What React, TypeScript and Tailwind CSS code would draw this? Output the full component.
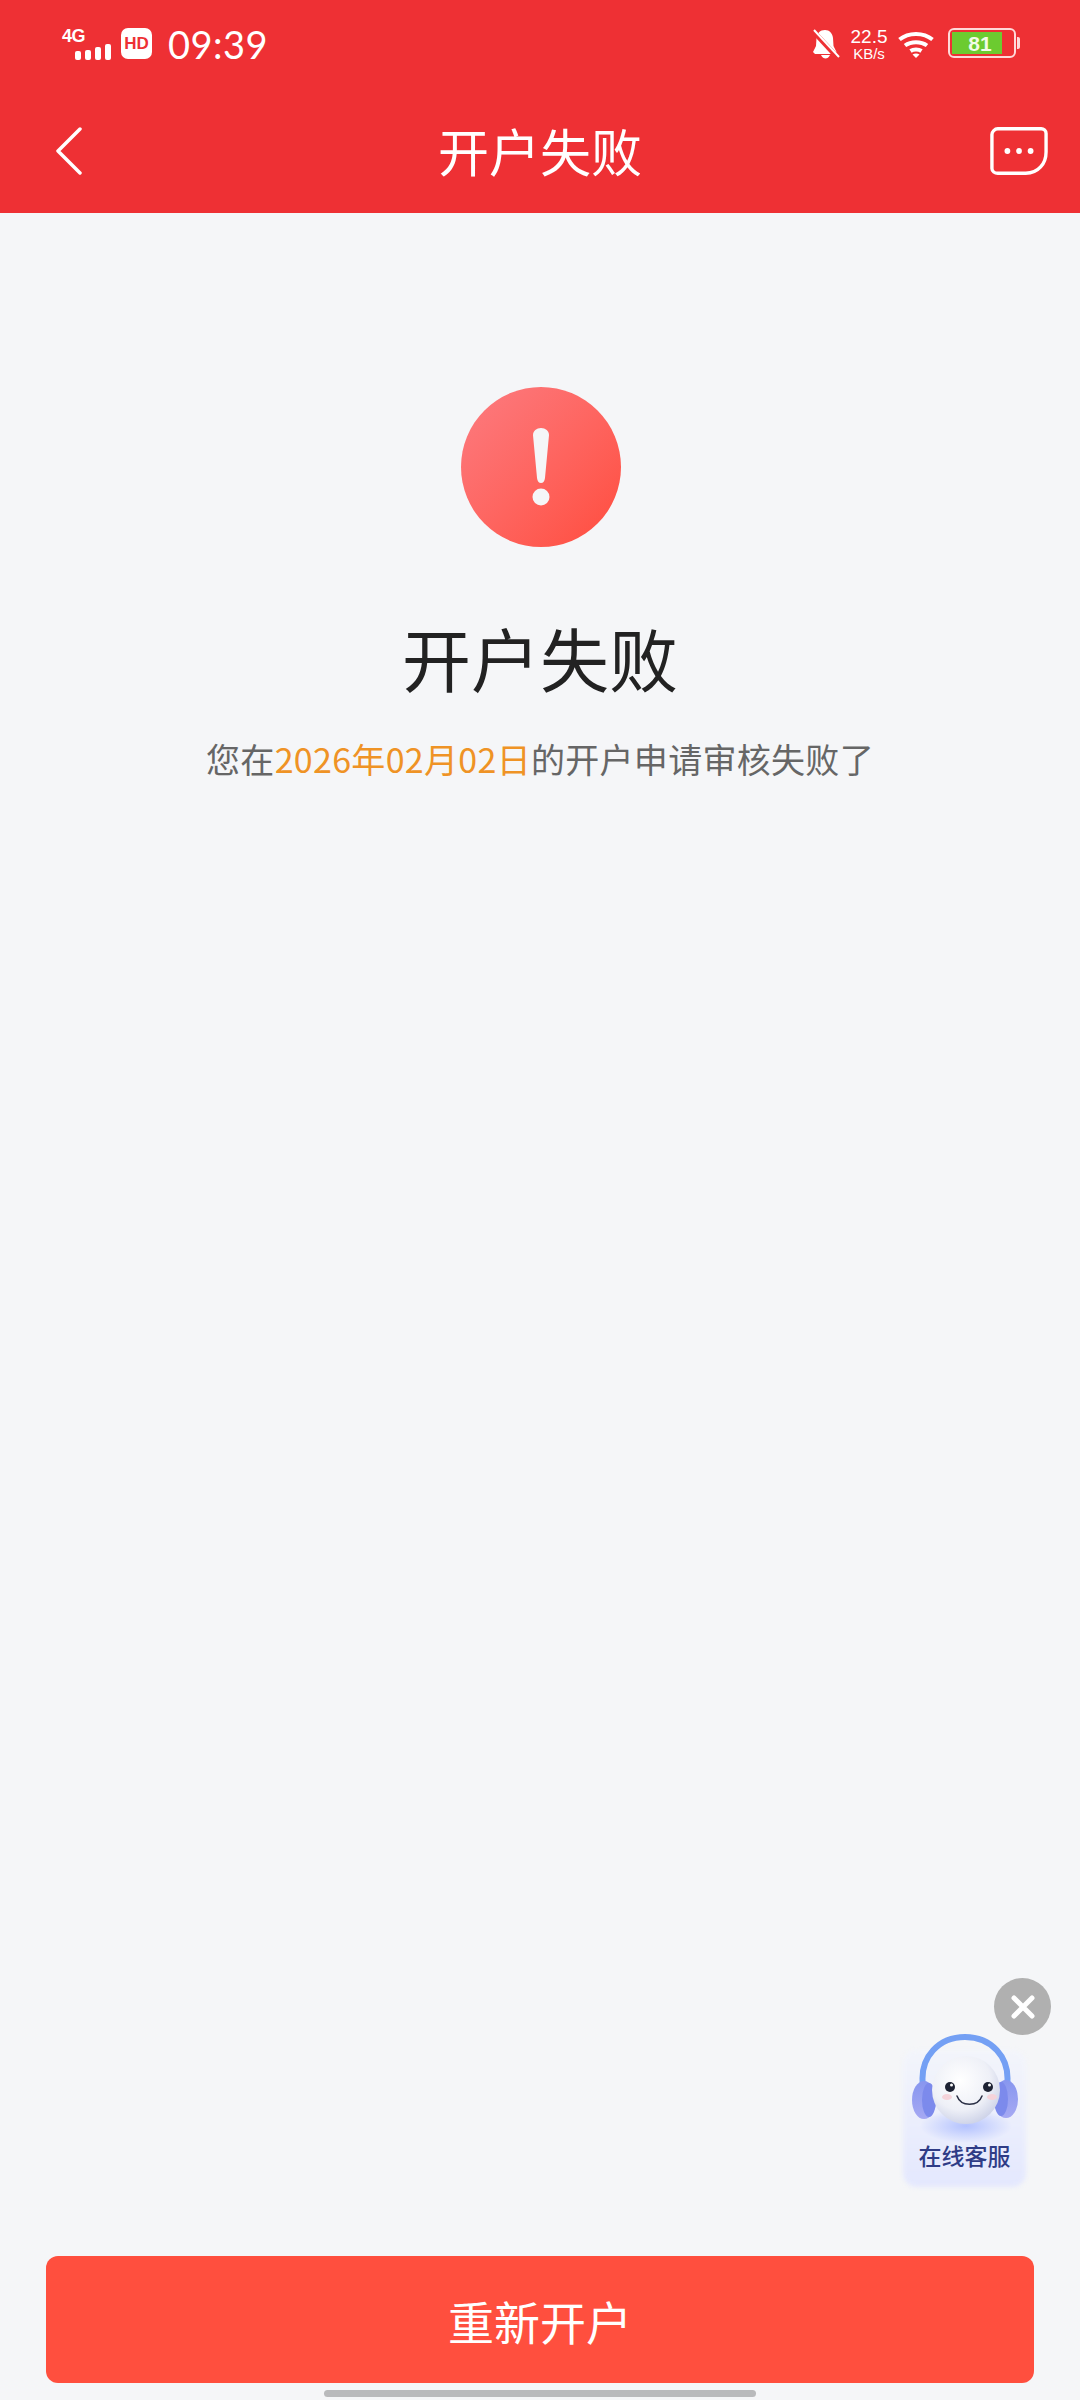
import React from "react";

const CJK = { fontFamily: '"Noto Sans CJK SC", "Noto Sans", sans-serif' };

function Signal() {
  return (
    <div className="relative w-[48px] h-[32px]">
      <span className="absolute left-0 top-[-2px] text-[18px] leading-[20px] font-bold text-white font-['Liberation_Sans',sans-serif] tracking-[-0.5px]">4G</span>
      <div className="absolute left-[13px] bottom-[0px] flex items-end gap-[4px]">
        <span className="w-[6px] h-[9px] rounded-[2px] bg-white" />
        <span className="w-[6px] h-[10px] rounded-[2px] bg-white" />
        <span className="w-[6px] h-[13px] rounded-[2px] bg-white" />
        <span className="w-[6px] h-[16px] rounded-[2px] bg-white" />
      </div>
    </div>
  );
}

function Bell() {
  return (
    <svg width="30" height="32" viewBox="0 0 30 32">
      <path d="M14 2c-5 0-8 3.500-8.500 8L5 18l-3 6 2 2h20l1.500-2-3-6-.5-8c-.5-4.500-3.500-8-8-8Z" fill="#fff" />
      <path d="M10 27c1 2.500 3 3.500 4.500 3.500s3.500-1 4.500-3.500Z" fill="#fff" />
      <path d="M2 3 27 30" stroke="#EE3034" strokeWidth="5" />
      <path d="M3 2 28 29" stroke="#fff" strokeWidth="2" />
    </svg>
  );
}

function Wifi() {
  return (
    <svg width="36" height="28" viewBox="0 0 36 28" fill="none" stroke="#fff" strokeWidth="4">
      <path d="M1.500 8.500C10.500 1 25.500 1 34.500 8.500" />
      <path d="M7 14.500c6-4.500 16-4.500 22 0" />
      <path d="M12.500 20c3-2 8-2 11 0" />
      <path d="M18 27l-3.500-3.500c2-1.200 5-1.200 7 0Z" fill="#fff" stroke="none" />
    </svg>
  );
}

function Battery() {
  return (
    <div className="flex items-center gap-[1px]">
      <div className="w-[68px] h-[30px] rounded-[6px] border-2 border-[#ffd9d9] p-[2px] flex">
        <div className="w-[50px] h-full bg-[#6CCB30] flex items-center justify-center">
          <span className="text-[21px] leading-none font-bold text-[#F2FBE6] font-['Liberation_Sans',sans-serif] pl-[6px]">81</span>
        </div>
      </div>
      <span className="w-[3px] h-[12px] rounded-r-[2px] bg-[#ffd9d9]" />
    </div>
  );
}

function Mascot() {
  return (
    <svg width="114" height="110" viewBox="0 0 114 110" className="absolute left-0 top-0">
      <defs>
        <radialGradient id="face" cx="0.42" cy="0.36" r="0.72">
          <stop offset="0" stopColor="#ffffff" />
          <stop offset="0.6" stopColor="#eef0f7" />
          <stop offset="1" stopColor="#c5cbe4" />
        </radialGradient>
        <linearGradient id="cup" x1="0" y1="0" x2="0" y2="1">
          <stop offset="0" stopColor="#8796ef" />
          <stop offset="1" stopColor="#a6a9f3" />
        </linearGradient>
        <radialGradient id="glow" cx="0.5" cy="0.5" r="0.5">
          <stop offset="0" stopColor="#a9baff" stopOpacity="0.85" />
          <stop offset="1" stopColor="#a9baff" stopOpacity="0" />
        </radialGradient>
      </defs>
      <ellipse cx="54" cy="92" rx="46" ry="17" fill="url(#glow)" />
      <path d="M11 52C7 22 28 3 53 3s46 19 42 49" fill="none" stroke="#74a0f4" strokeWidth="6" />
      <ellipse cx="12" cy="66" rx="12" ry="19" fill="url(#cup)" />
      <ellipse cx="94" cy="65" rx="12" ry="19" fill="url(#cup)" />
      <ellipse cx="17" cy="66" rx="7" ry="17" fill="#7c8aec" />
      <ellipse cx="89" cy="65" rx="7" ry="17" fill="#7c8aec" />
      <circle cx="54" cy="56" r="34" fill="url(#face)" />
      <circle cx="38" cy="53" r="5" fill="#1d2233" />
      <circle cx="76" cy="53" r="5" fill="#1d2233" />
      <circle cx="39.500" cy="51" r="1.500" fill="#fff" />
      <circle cx="77.500" cy="51" r="1.500" fill="#fff" />
      <ellipse cx="35" cy="63" rx="5" ry="3" fill="#f5d3da" />
      <ellipse cx="80" cy="63" rx="5" ry="3" fill="#f5d3da" />
      <path d="M45 62c4 11 21 11 25 0" fill="none" stroke="#2b3046" strokeWidth="1.500" strokeLinecap="round" />
    </svg>
  );
}

export default function App() {
  return (
    <div className="relative w-[1080px] h-[2400px] flex flex-col bg-[#F5F6F8] overflow-hidden" style={CJK}>
      <header className="h-[213px] shrink-0 bg-[#EE3034] text-white flex flex-col">
        <div className="h-[88px] pl-[62px] pr-[60px] pt-[28px] flex items-start justify-between">
          <div className="flex items-start">
            <Signal />
            <div className="ml-[11px] mt-[0px] w-[31px] h-[31px] rounded-[7px] bg-white flex items-center justify-center">
              <span className="text-[17px] leading-none font-black text-[#EE3034] font-['Liberation_Sans',sans-serif]">HD</span>
            </div>
            <span className="ml-[16px] text-[38px] leading-[32px] tracking-[0.5px] font-['Lato',sans-serif]">09:39</span>
          </div>
          <div className="flex items-start">
            <Bell />
            <div className="ml-[9px] w-[38px] flex flex-col items-center font-['Liberation_Sans',sans-serif]">
              <span className="text-[19px] leading-[18px]">22.5</span>
              <span className="text-[15px] leading-[15px]">KB/s</span>
            </div>
            <div className="ml-[10px] mt-[3px]"><Wifi /></div>
            <div className="ml-[14px]"><Battery /></div>
          </div>
        </div>
        <div className="h-[125px] pl-[54px] pr-[32px] flex items-center">
          <div className="w-[98px]">
            <svg width="30" height="48" viewBox="0 0 30 48" fill="none" stroke="#fff" strokeWidth="3.500" strokeLinecap="round" strokeLinejoin="round">
              <path d="M26 2 4 24l22 22" />
            </svg>
          </div>
          <h1 className="flex-1 text-center text-[51px] leading-none font-normal">开户失败</h1>
          <div className="w-[120px] flex justify-end">
            <svg width="58" height="50" viewBox="0 0 60 50" fill="none" stroke="#fff" strokeWidth="3.500">
              <path d="M8 2h45c2.500 0 5 2 5 5v19c0 12-8 22-21 22H8c-3 0-6-2-6-5V8c0-3 3-6 6-6Z" />
              <g fill="#fff" stroke="none">
                <circle cx="18" cy="25" r="3" />
                <circle cx="30" cy="25" r="3" />
                <circle cx="42" cy="25" r="3" />
              </g>
            </svg>
          </div>
        </div>
      </header>

      <main className="flex-1 flex flex-col items-center pt-[174px]">
        <div className="ml-[2px] w-[160px] h-[160px] rounded-full bg-gradient-to-br from-[#FC7B80] to-[#FF4B3C] flex items-center justify-center">
          <svg width="20" height="78" viewBox="0 0 20 78" fill="#F5F6F8">
            <path d="M2 7c0-4 3.500-7 8-7s8 3 8 7l-4 43c-.3 3-1.800 5-4 5s-3.700-2-4-5Z" />
            <circle cx="10" cy="69" r="8.500" />
          </svg>
        </div>
        <h2 className="mt-[64px] text-[69px] leading-[92px] font-normal text-[#222222]">开户失败</h2>
        <p className="mt-[32px] text-[34px] leading-[48px] text-[#666666] tracking-[0.3px]">
          您在<span className="text-[#EF9325]">2026年02月02日</span>的开户申请审核失败了
        </p>
      </main>

      <div className="absolute left-[903px] top-[1978px] w-[148px] h-[209px]">
        <button className="absolute right-0 top-0 w-[57px] h-[57px] rounded-full bg-[#B0B0B0] flex items-center justify-center">
          <svg width="24" height="24" viewBox="0 0 24 24" stroke="#fff" strokeWidth="5" strokeLinecap="round"><path d="M3 3l18 18M21 3 3 21" /></svg>
        </button>
        <div className="absolute left-0 top-[72px] w-[123px] h-[137px] rounded-[14px] bg-gradient-to-b from-[#F3F5FB] to-[#E4E8FE] blur-[2px]" />
        <span className="absolute left-0 top-[163px] w-[123px] text-center text-[23px] leading-[28px] font-medium text-[#2F3C86]">在线客服</span>
        <div className="absolute left-[9px] top-[56px] w-[114px] h-[110px]"><Mascot /></div>
      </div>

      <footer className="shrink-0 flex flex-col items-center">
        <button className="w-[988px] h-[127px] rounded-[12px] bg-[#FF4F3E] text-white text-[46px] leading-none">重新开户</button>
        <span className="mt-[7px] mb-[3px] w-[432px] h-[7px] rounded-full bg-[#B9BABC]" />
      </footer>
    </div>
  );
}
